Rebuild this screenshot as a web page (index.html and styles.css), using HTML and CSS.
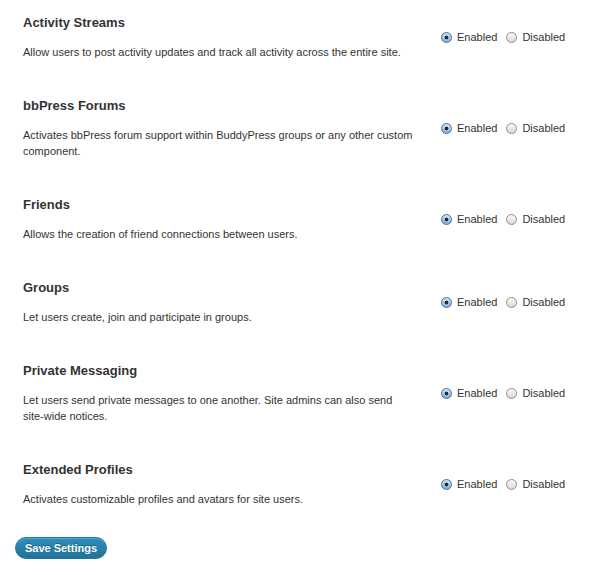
FILE: index.html
```html
<!DOCTYPE html>
<html>
<head>
<meta charset="utf-8">
<link rel="stylesheet" href="styles.css">
</head>
<body>
<form class="settings">
  <div class="row">
    <div class="info">
      <h3 class="title">Activity Streams</h3>
      <p class="desc">Allow users to post activity updates and track all activity across the entire site.</p>
    </div>
    <div class="choices">
      <label class="opt"><input type="radio" name="activity" checked> Enabled</label>
      <label class="opt"><input type="radio" name="activity"> Disabled</label>
    </div>
  </div>
  <div class="row">
    <div class="info">
      <h3 class="title">bbPress Forums</h3>
      <p class="desc">Activates bbPress forum support within BuddyPress groups or any other custom component.</p>
    </div>
    <div class="choices">
      <label class="opt"><input type="radio" name="forums" checked> Enabled</label>
      <label class="opt"><input type="radio" name="forums"> Disabled</label>
    </div>
  </div>
  <div class="row">
    <div class="info">
      <h3 class="title">Friends</h3>
      <p class="desc">Allows the creation of friend connections between users.</p>
    </div>
    <div class="choices">
      <label class="opt"><input type="radio" name="friends" checked> Enabled</label>
      <label class="opt"><input type="radio" name="friends"> Disabled</label>
    </div>
  </div>
  <div class="row">
    <div class="info">
      <h3 class="title">Groups</h3>
      <p class="desc">Let users create, join and participate in groups.</p>
    </div>
    <div class="choices">
      <label class="opt"><input type="radio" name="groups" checked> Enabled</label>
      <label class="opt"><input type="radio" name="groups"> Disabled</label>
    </div>
  </div>
  <div class="row">
    <div class="info">
      <h3 class="title">Private Messaging</h3>
      <p class="desc">Let users send private messages to one another. Site admins can also send <span class="nowrap">site-wide</span> notices.</p>
    </div>
    <div class="choices">
      <label class="opt"><input type="radio" name="messages" checked> Enabled</label>
      <label class="opt"><input type="radio" name="messages"> Disabled</label>
    </div>
  </div>
  <div class="row">
    <div class="info">
      <h3 class="title">Extended Profiles</h3>
      <p class="desc">Activates customizable profiles and avatars for site users.</p>
    </div>
    <div class="choices">
      <label class="opt"><input type="radio" name="profiles" checked> Enabled</label>
      <label class="opt"><input type="radio" name="profiles"> Disabled</label>
    </div>
  </div>
  <div class="actions">
    <button type="button" class="save">Save Settings</button>
  </div>
</form>
</body>
</html>
```
FILE: styles.css
```css
html, body {
  margin: 0;
  padding: 0;
  background: #fff;
}
body {
  font-family: "Liberation Sans", Arial, Helvetica, sans-serif;
  color: #333;
}
.settings {
  padding: 1px 0 0 23px;
}
.row {
  display: flex;
  align-items: center;
  padding: 14px 0 24px;
}
.info {
  width: 412px;
}
.info .desc {
  max-width: 395px;
}
.nowrap {
  white-space: nowrap;
}
.title {
  margin: 0 0 13px;
  font-size: 13px;
  line-height: 16px;
  font-weight: bold;
  color: #333;
}
.desc {
  margin: 0;
  font-size: 11px;
  line-height: 16px;
  color: #333;
}
.choices {
  display: flex;
  gap: 9px;
  font-size: 11px;
  line-height: 14px;
  margin-left: 6px;
  margin-top: -1px;
}
.opt {
  display: flex;
  align-items: center;
  color: #333;
}
.opt input {
  -webkit-appearance: none;
  appearance: none;
  width: 11px;
  height: 11px;
  margin: 0 5px 0 0;
  border-radius: 50%;
  border: 1px solid #8e8e8e;
  background: linear-gradient(#fafafa, #d8d8d8);
  box-sizing: border-box;
  position: relative;
}
.opt input:checked {
  border-color: #4d6c8f;
  background: radial-gradient(circle, #1d2a3a 0, #1d2a3a 1.6px, transparent 2.2px), linear-gradient(#cfe3f7, #7fb0e0);
}
.actions {
  padding: 6px 0 0;
  margin-left: -8px;
}
.save {
  font-family: "Liberation Sans", Arial, sans-serif;
  font-size: 11px;
  font-weight: bold;
  color: #fff;
  height: 22px;
  width: 92px;
  padding: 0;
  border: 1px solid #21759b;
  border-radius: 11px;
  background: linear-gradient(#2e8dbb, #21729a);
  text-shadow: 0 -1px 0 rgba(0,0,0,0.3);
  box-shadow: inset 0 1px 0 rgba(120,200,230,0.5);
}
```
